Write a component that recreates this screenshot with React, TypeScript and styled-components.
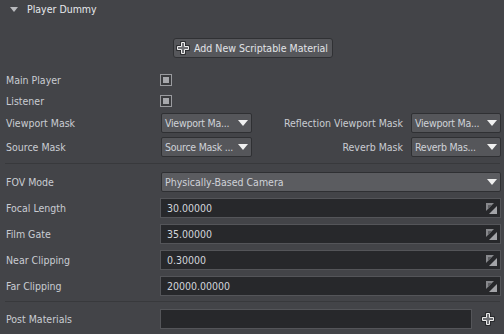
import React from "react";
import styled, { createGlobalStyle } from "styled-components";

const Global = createGlobalStyle`
  html, body { margin: 0; padding: 0; background: #434448; }
  body { font-family: "DejaVu Sans Condensed", "DejaVu Sans", sans-serif; font-size: 10.5px; }
  * { box-sizing: border-box; }
`;

const Panel = styled.div`
  width: 504px;
  height: 334px;
  background: #434448;
  color: #c9ccd2;
  display: flex;
  flex-direction: column;
  overflow: hidden;
`;

const Header = styled.div`
  height: 17px;
  display: flex;
  align-items: center;
  padding-left: 10px;
  gap: 9px;
  color: #e6e8ec;
`;

const Caret = styled.span`
  width: 0;
  height: 0;
  border-left: 4px solid transparent;
  border-right: 4px solid transparent;
  border-top: 5px solid #b9babe;
  margin-top: 1px;
`;

const ButtonRow = styled.div`
  display: flex;
  justify-content: center;
  padding-top: 21px;
  padding-left: 2px;
  margin-bottom: 11px;
`;

const Button = styled.div`
  height: 20px;
  padding: 0 4px 0 2px;
  display: flex;
  align-items: center;
  gap: 4px;
  background: #56575b;
  border: 1px solid #303134;
  border-radius: 3px;
  color: #e2e4e8;
`;

const Row = styled.div<{ $h: number }>`
  height: ${(p) => p.$h}px;
  display: flex;
  align-items: center;
  padding: 0 3px 0 6px;
`;

const Label = styled.div`
  width: 154px;
  flex-shrink: 0;
  white-space: nowrap;
`;

const RightLabel = styled.div`
  flex: 1;
  text-align: right;
  padding-right: 7px;
  white-space: nowrap;
`;

const Check = styled.div`
  width: 12px;
  height: 12px;
  border: 1px solid #9a9b9f;
  background: #3b3c3f;
  display: flex;
  align-items: center;
  justify-content: center;
  &::after {
    content: "";
    width: 6px;
    height: 6px;
    background: #a7a8ac;
  }
`;

const Combo = styled.div<{ $w?: number; $light?: boolean }>`
  height: 20px;
  ${(p) => (p.$w ? `width: ${p.$w}px; flex-shrink: 0;` : "flex: 1;")}
  margin-left: 1px;
  display: flex;
  align-items: center;
  padding: 0 3px 0 3px;
  background: ${(p) => (p.$light ? "#5b5c60" : "#55565a")};
  border: 1px solid #2f3033;
  border-radius: 2px;
  color: #cfd2d8;
  white-space: nowrap;
`;

const ComboText = styled.span<{ $tight?: boolean }>`
  flex: 1;
  min-width: 0;
  letter-spacing: ${(p) => (p.$tight ? "-0.25px" : "0")};
`;

const Arrow = styled.span`
  flex-shrink: 0;
  width: 0;
  height: 0;
  border-left: 5px solid transparent;
  border-right: 5px solid transparent;
  border-top: 6px solid #f0f0f0;
  margin-left: 2px;
`;

const Field = styled.div`
  flex: 1;
  height: 20px;
  display: flex;
  align-items: center;
  padding: 0 3px 0 6px;
  background: #27282b;
  border: 1px solid #545559;
  color: #d3d6dc;
`;

const FieldText = styled.span`
  flex: 1;
`;

const Separator = styled.div<{ $top: number; $bottom: number }>`
  height: 1px;
  margin: ${(p) => p.$top}px 4px ${(p) => p.$bottom}px 5px;
  background: #38393c;
`;

const PlusSlot = styled.div`
  width: 29px;
  flex-shrink: 0;
  display: flex;
  justify-content: center;
  padding-left: 2px;
`;

const PlusIcon = () => (
  <svg width="14" height="14" viewBox="0 0 14 14">
    <path
      d="M5.5 1.5h3v4h4v3h-4v4h-3v-4h-4v-3h4z"
      fill="none"
      stroke="#1f2023"
      strokeWidth="2.4"
      strokeLinejoin="miter"
    />
    <path
      d="M5.5 1.5h3v4h4v3h-4v4h-3v-4h-4v-3h4z"
      fill="#6e6f73"
      stroke="#ececec"
      strokeWidth="1"
    />
  </svg>
);

const ResizeIcon = () => (
  <svg width="11" height="11" viewBox="0 0 11 11">
    <polygon points="0,0 8,0 0,8" fill="#87888c" />
    <polygon points="2,2 6,2 2,6" fill="#5d5e62" />
    <polygon points="11,3 11,11 3,11" fill="#a3a4a8" />
  </svg>
);

const Dropdown = ({ text, w, light }: { text: string; w?: number; light?: boolean }) => (
  <Combo $w={w} $light={light}>
    <ComboText $tight={!!w}>{text}</ComboText>
    <Arrow />
  </Combo>
);

const NumField = ({ value }: { value: string }) => (
  <Field>
    <FieldText>{value}</FieldText>
    <ResizeIcon />
  </Field>
);

export default function App() {
  return (
    <>
      <Global />
      <Panel>
        <Header>
          <Caret />
          <span>Player Dummy</span>
        </Header>
        <ButtonRow>
          <Button>
            <PlusIcon />
            <span>Add New Scriptable Material</span>
          </Button>
        </ButtonRow>
        <Row $h={21}>
          <Label>Main Player</Label>
          <Check />
        </Row>
        <Row $h={21}>
          <Label>Listener</Label>
          <Check />
        </Row>
        <Row $h={24}>
          <Label>Viewport Mask</Label>
          <Dropdown text="Viewport Ma..." w={91} />
          <RightLabel>Reflection Viewport Mask</RightLabel>
          <Dropdown text="Viewport Ma..." w={90} />
        </Row>
        <Row $h={24}>
          <Label>Source Mask</Label>
          <Dropdown text="Source Mask ..." w={91} />
          <RightLabel>Reverb Mask</RightLabel>
          <Dropdown text="Reverb Mas..." w={90} />
        </Row>
        <Separator $top={4} $bottom={5} />
        <Row $h={26}>
          <Label>FOV Mode</Label>
          <Dropdown text="Physically-Based Camera" light />
        </Row>
        <Row $h={26}>
          <Label>Focal Length</Label>
          <NumField value="30.00000" />
        </Row>
        <Row $h={26}>
          <Label>Film Gate</Label>
          <NumField value="35.00000" />
        </Row>
        <Row $h={26}>
          <Label>Near Clipping</Label>
          <NumField value="0.30000" />
        </Row>
        <Row $h={26}>
          <Label>Far Clipping</Label>
          <NumField value="20000.00000" />
        </Row>
        <Separator $top={2} $bottom={4} />
        <Row $h={26}>
          <Label>Post Materials</Label>
          <Field />
          <PlusSlot>
            <PlusIcon />
          </PlusSlot>
        </Row>
      </Panel>
    </>
  );
}
